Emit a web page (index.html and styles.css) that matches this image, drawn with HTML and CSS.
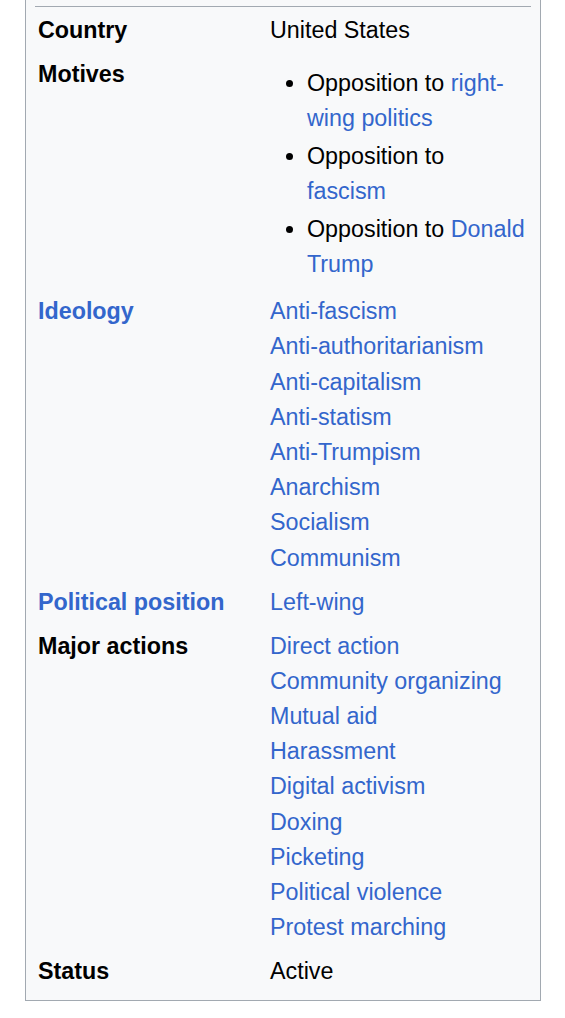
FILE: index.html
```html
<!DOCTYPE html>
<html lang="en">
<head>
    <meta charset="UTF-8">
    <meta name="viewport" content="width=device-width, initial-scale=1.0">
    <title>Infobox</title>
    <link rel="stylesheet" href="styles.css">
</head>
<body>

    <table class="infobox">
        <tr>
            <td colspan="2" class="divider"></td>
        </tr>
        <tr>
            <th>Country</th>
            <td>United States</td>
        </tr>
        <tr>
            <th>Motives</th>
            <td>
                <ul>
                    <li>Opposition to <a href="#">right-wing politics</a></li>
                    <li>Opposition to <a href="#">fascism</a></li>
                    <li>Opposition to <a href="#">Donald Trump</a></li>
                </ul>
            </td>
        </tr>
        <tr>
            <th><a href="#">Ideology</a></th>
            <td>
                <a href="#">Anti-fascism</a><br>
                <a href="#">Anti-authoritarianism</a><br>
                <a href="#">Anti-capitalism</a><br>
                <a href="#">Anti-statism</a><br>
                <a href="#">Anti-Trumpism</a><br>
                <a href="#">Anarchism</a><br>
                <a href="#">Socialism</a><br>
                <a href="#">Communism</a>
            </td>
        </tr>
        <tr>
            <th><a href="#">Political position</a></th>
            <td><a href="#">Left-wing</a></td>
        </tr>
        <tr>
            <th>Major actions</th>
            <td>
                <a href="#">Direct action</a><br>
                <a href="#">Community organizing</a><br>
                <a href="#">Mutual aid</a><br>
                <a href="#">Harassment</a><br>
                <a href="#">Digital activism</a><br>
                <a href="#">Doxing</a><br>
                <a href="#">Picketing</a><br>
                <a href="#">Political violence</a><br>
                <a href="#">Protest marching</a>
            </td>
        </tr>
        <tr>
            <th>Status</th>
            <td>Active</td>
        </tr>
    </table>

</body>
</html>
```

FILE: styles.css
```css
body {
    margin: 0;
    background: white;
    color: #000;
    font-family: "Liberation Sans", Arial, sans-serif;
    font-size: 23.3px;
    line-height: 35.2px;
}
.infobox {
    width: 516px;
    margin: -20px 0 0 25px;
    padding: 4.3px 6px;
    border: 1px solid #a2a9b1;
    border-spacing: 3px;
    background: #f8f9fa;
}
.infobox th,
.infobox td {
    padding: 2.9px 3px;
    vertical-align: top;
    text-align: left;
}
.infobox td {
    padding-right: 4px;
}
.infobox th {
    width: 223px;
    font-weight: bold;
}
.divider {
    height: 18px;
    border-bottom: 1px solid #a2a9b1;
}
.infobox td.divider {
    padding: 0;
}
a {
    color: #3366cc;
    text-decoration: none;
}
ul {
    margin: 8.4px 0 0 37px;
    padding: 0;
}
li {
    margin-bottom: 2.9px;
}
```
